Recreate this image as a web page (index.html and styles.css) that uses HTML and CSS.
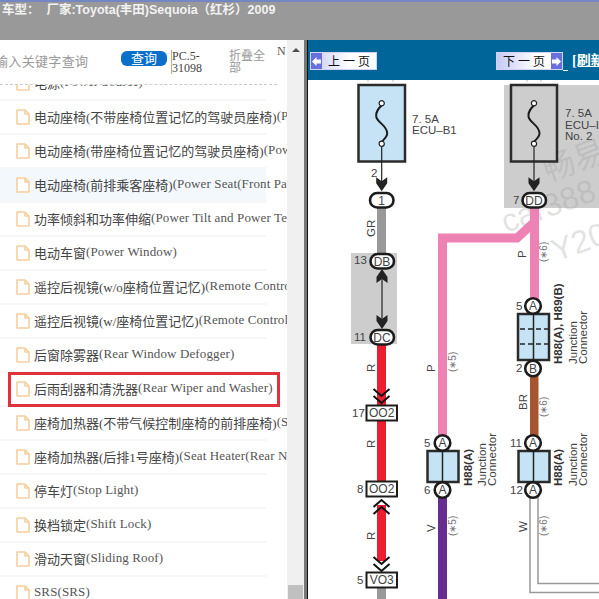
FILE: index.html
```html
<!DOCTYPE html>
<html lang="zh-CN">
<head>
    <meta charset="UTF-8">
    <title>车型</title>
    <link rel="stylesheet" href="styles.css">
</head>
<body>
    <div class="topbar">车型：&nbsp;&nbsp;厂家:Toyota(丰田)Sequoia（红杉）2009</div>

    <div class="main">
        <div class="side">
            <div class="side-col">
                <div class="search-wrap">
                    <div class="search">
                        <span class="search-input">输入关键字查询</span>
                        <span class="search-btn">查询</span>
                        <span class="search-code">PC.5-31098</span>
                        <span class="search-fold">折叠全部</span>
                    </div>
                    <span class="search-n">N</span>
                </div>
                <ul class="list">
                    <li class="row"><svg class="doc"><use href="#doc"/></svg>电源<span class="en">(Power Source)</span></li>
                    <li class="row"><svg class="doc"><use href="#doc"/></svg>电动座椅(不带座椅位置记忆的驾驶员座椅)<span class="en">(Power Seat)</span></li>
                    <li class="row"><svg class="doc"><use href="#doc"/></svg>电动座椅(带座椅位置记忆的驾驶员座椅)<span class="en">(Power Seat)</span></li>
                    <li class="row row-hover"><svg class="doc"><use href="#doc"/></svg>电动座椅(前排乘客座椅)<span class="en">(Power Seat(Front Passenger Seat))</span></li>
                    <li class="row"><svg class="doc"><use href="#doc"/></svg>功率倾斜和功率伸缩<span class="en">(Power Tilt and Power Telescopic)</span></li>
                    <li class="row"><svg class="doc"><use href="#doc"/></svg>电动车窗<span class="en">(Power Window)</span></li>
                    <li class="row"><svg class="doc"><use href="#doc"/></svg>遥控后视镜(w/o座椅位置记忆)<span class="en">(Remote Control Mirror)</span></li>
                    <li class="row"><svg class="doc"><use href="#doc"/></svg>遥控后视镜(w/座椅位置记忆)<span class="en">(Remote Control Mirror)</span></li>
                    <li class="row"><svg class="doc"><use href="#doc"/></svg>后窗除雾器<span class="en">(Rear Window Defogger)</span></li>
                    <li class="row row-marked"><svg class="doc"><use href="#doc"/></svg>后雨刮器和清洗器<span class="en">(Rear Wiper and Washer)</span></li>
                    <li class="row"><svg class="doc"><use href="#doc"/></svg>座椅加热器(不带气候控制座椅的前排座椅)<span class="en">(Seat Heater)</span></li>
                    <li class="row"><svg class="doc"><use href="#doc"/></svg>座椅加热器(后排1号座椅)<span class="en">(Seat Heater(Rear No. 1 Seat))</span></li>
                    <li class="row"><svg class="doc"><use href="#doc"/></svg>停车灯<span class="en">(Stop Light)</span></li>
                    <li class="row"><svg class="doc"><use href="#doc"/></svg>换档锁定<span class="en">(Shift Lock)</span></li>
                    <li class="row"><svg class="doc"><use href="#doc"/></svg>滑动天窗<span class="en">(Sliding Roof)</span></li>
                    <li class="row"><svg class="doc"><use href="#doc"/></svg><span class="en">SRS(SRS)</span></li>
                </ul>
            </div>
            <div class="scroll">
                <span class="scroll-up"></span>
                <span class="scroll-thumb"></span>
            </div>
        </div>

        <div class="view">
            <div class="view-head">
                <span class="page-btn page-prev"><i class="page-arrow">
                    <svg width="9" height="9" viewBox="0 0 9 9"><path d="M0 4.5 4.5 0v2.5H9v4H4.5V9z" fill="#fff"/></svg>
                </i><b>上 一 页</b></span>
                <span class="page-btn page-next"><b>下 一 页</b><i class="page-arrow">
                    <svg width="9" height="9" viewBox="0 0 9 9"><path d="M9 4.5 4.5 0v2.5H0v4h4.5V9z" fill="#fff"/></svg>
                </i></span>
                <span class="page-gap"></span>
                <span class="page-refresh">[刷新]</span>
            </div>

            <svg class="diagram" viewBox="308 80 291 519">
                <defs>
                    <symbol id="doc" viewBox="0 0 14 16">
                        <path d="M1 1h8l4 4v10H1z M9 1v4h4" fill="#fff" stroke="#f6cf9e" stroke-width="1.6" stroke-linejoin="round"/>
                    </symbol>
                    <g id="fuse">
                        <path d="M0 2C-3 5-6 8-5.500 13-5 19 5.500 22 5.500 30 5.500 34 2 36 0 38.500" class="fuse-line"/>
                        <circle cx="0" cy="0" r="2.600" class="fuse-dot"/>
                        <circle cx="0" cy="40.500" r="2.600" class="fuse-dot"/>
                        <path d="M0 43V80" class="thin"/>
                        <path d="M-5.500 74 0 78 5.500 74V80L0 88-5.500 80Z" fill="#222"/>
                    </g>
                    <g id="junction">
                        <rect x="-15" y="0" width="31" height="31" class="blue-box"/>
                        <path d="M0 0V31" class="thin2"/>
                    </g>
                    <path id="chev-down" d="M-8 0 0 7 8 0M-8 7 0 14 8 7" class="chev"/>
                    <path id="chev-up" d="M-8 7 0 0 8 7M-8 14 0 7 8 14" class="chev"/>
                </defs>

                <rect x="504" y="85" width="95" height="123" class="shade"/>
                <rect x="351" y="253" width="46" height="91" class="shade"/>
                <path d="M368 80v2M393 80v2M527 80v2M541 80v2" class="tick"/>

                <!-- watermark -->
                <text transform="translate(548 182) rotate(-20)" class="mark">畅易</text>
                <text transform="translate(506 233) rotate(-20)" class="mark">car388</text>
                <text transform="translate(556 262) rotate(-20)" class="mark">Y20</text>

                <!-- wires -->
                <rect x="377" y="206" width="9" height="50" fill="#999"/>
                <rect x="377" y="345" width="9" height="60" fill="#ed1c2e"/>
                <rect x="377" y="421" width="9" height="60" fill="#ed1c2e"/>
                <rect x="377" y="505" width="9" height="56" fill="#ed1c2e"/>
                <rect x="377" y="588" width="9" height="11" fill="#999"/>
                <path d="M442.500 440V238H517L534.500 222" class="wire-pink"/>
                <rect x="530" y="206" width="9" height="94" fill="#ee82b4"/>
                <rect x="530" y="374" width="8.500" height="62" fill="#a5552f"/>
                <rect x="438" y="496" width="9" height="103" fill="#662d91"/>
                <path d="M530 497V592.500H599M538 497V583.500H599" class="wire-white"/>

                <!-- fuses -->
                <rect x="358.500" y="85" width="46.500" height="76.500" class="blue-box"/>
                <use href="#fuse" x="381.700" y="103.300"/>
                <rect x="511" y="85" width="46" height="76.500" class="grey-box"/>
                <use href="#fuse" x="534" y="103.300"/>
                <text x="412" y="122.500" class="lbl">7. 5A</text>
                <text x="412" y="134" class="lbl">ECU–B1</text>
                <text x="565" y="117" class="lbl">7. 5A</text>
                <text x="565" y="128.500" class="lbl">ECU–IG</text>
                <text x="565" y="140" class="lbl">No. 2</text>
                <text x="371" y="177" class="lbl">2</text>
                <text x="513" y="204" class="lbl">7</text>

                <!-- ovals and boxes -->
                <rect x="370" y="193" width="23.500" height="14.500" rx="7.200" class="pin"/>
                <text x="381.700" y="204.500" class="pin-t">1</text>
                <rect x="522.500" y="193" width="23.500" height="14.500" rx="7.200" class="pin"/>
                <text x="534" y="204.500" class="pin-t">DD</text>
                <rect x="370.500" y="254" width="23.500" height="14.500" rx="7.200" class="pin"/>
                <text x="382" y="265.500" class="pin-t">DB</text>
                <rect x="370.500" y="330" width="23.500" height="14.500" rx="7.200" class="pin"/>
                <text x="382" y="341.500" class="pin-t">DC</text>
                <text x="354" y="264" class="lbl">13</text>
                <text x="354" y="341" class="lbl">11</text>

                <path d="M382 272V326" class="thin"/>
                <path d="M376.500 283 382 279 387.500 283V277L382 269 376.500 277Z" fill="#222"/>
                <path d="M376.500 315 382 319 387.500 315V321L382 329 376.500 321Z" fill="#222"/>

                <rect x="366.500" y="405.500" width="30.500" height="15" class="pin-box"/>
                <text x="381.700" y="417" class="pin-t">OO2</text>
                <rect x="366.500" y="481.500" width="30.500" height="15" class="pin-box"/>
                <text x="381.700" y="493" class="pin-t">OO2</text>
                <rect x="366.500" y="572.500" width="30.500" height="15" class="pin-box"/>
                <text x="381.700" y="584" class="pin-t">VO3</text>
                <text x="352" y="417" class="lbl">17</text>
                <text x="357" y="493" class="lbl">8</text>
                <text x="357" y="584" class="lbl">5</text>
                <use href="#chev-down" x="381.500" y="389"/>
                <use href="#chev-up" x="381.500" y="500"/>
                <use href="#chev-down" x="381.500" y="557"/>

                <!-- junction connectors -->
                <rect x="518" y="314" width="31" height="46" class="blue-box"/>
                <path d="M533.500 314V360" class="thin2"/>
                <path d="M520 329H548M520 344H548" class="dash"/>
                <circle cx="533" cy="306" r="7.800" class="pin"/>
                <text x="533" y="310" class="pin-t">A</text>
                <circle cx="533" cy="368.500" r="7.800" class="pin"/>
                <text x="533" y="372.500" class="pin-t">B</text>
                <text x="516" y="310" class="lbl">5</text>
                <text x="516" y="372" class="lbl">2</text>

                <use href="#junction" x="442.500" y="451"/>
                <circle cx="442.500" cy="443" r="7.800" class="pin"/>
                <text x="442.500" y="447" class="pin-t">A</text>
                <circle cx="442.500" cy="490" r="7.800" class="pin"/>
                <text x="442.500" y="494" class="pin-t">A</text>
                <text x="424" y="447" class="lbl">5</text>
                <text x="424" y="494" class="lbl">6</text>

                <use href="#junction" x="533.500" y="451"/>
                <circle cx="533" cy="443" r="7.800" class="pin"/>
                <text x="533" y="447" class="pin-t">A</text>
                <circle cx="533" cy="490" r="7.800" class="pin"/>
                <text x="533" y="494" class="pin-t">A</text>
                <text x="510" y="447" class="lbl">11</text>
                <text x="510" y="494" class="lbl">12</text>

                <!-- rotated labels -->
                <text transform="translate(375 237) rotate(-90)" class="lbl">GR</text>
                <text transform="translate(375 372) rotate(-90)" class="lbl">R</text>
                <text transform="translate(375 448) rotate(-90)" class="lbl">R</text>
                <text transform="translate(375 540) rotate(-90)" class="lbl">R</text>
                <text transform="translate(435 372) rotate(-90)" class="lbl">P</text>
                <text transform="translate(526 258) rotate(-90)" class="lbl">P</text>
                <text transform="translate(527 410) rotate(-90)" class="lbl">BR</text>
                <text transform="translate(435 532) rotate(-90)" class="lbl">V</text>
                <text transform="translate(527 532) rotate(-90)" class="lbl">W</text>
                <text transform="translate(456 372) rotate(-90)" class="note">(∗5)</text>
                <text transform="translate(547 262) rotate(-90)" class="note">(∗6)</text>
                <text transform="translate(547 417) rotate(-90)" class="note">(∗6)</text>
                <text transform="translate(456 536) rotate(-90)" class="note">(∗5)</text>
                <text transform="translate(547 536) rotate(-90)" class="note">(∗6)</text>

                <text transform="translate(562 364) rotate(-90)" class="lbl-b">H88(A), H89(B)</text>
                <text transform="translate(576.500 364) rotate(-90)" class="lbl">Junction</text>
                <text transform="translate(587 364) rotate(-90)" class="lbl">Connector</text>
                <text transform="translate(472 486) rotate(-90)" class="lbl-b">H88(A)</text>
                <text transform="translate(485.500 486) rotate(-90)" class="lbl">Junction</text>
                <text transform="translate(496 486) rotate(-90)" class="lbl">Connector</text>
                <text transform="translate(562 486) rotate(-90)" class="lbl-b">H88(A)</text>
                <text transform="translate(576.500 486) rotate(-90)" class="lbl">Junction</text>
                <text transform="translate(587 486) rotate(-90)" class="lbl">Connector</text>
            </svg>
        </div>
    </div>
</body>
</html>
```

FILE: styles.css
```css
html, body {
    margin: 0;
    height: 100%;
    overflow: hidden;
    background: #fff;
}
body {
    font-family: "Liberation Serif", "Noto Sans CJK SC", serif;
    font-size: 13px;
}
.topbar {
    box-sizing: border-box;
    height: 40px;
    padding: 1px 0 0 2px;
    border-top: 2px solid #7487c4;
    background: #999;
    color: #f2f2f2;
    font-family: "Liberation Sans", "Noto Sans CJK SC", sans-serif;
    font-size: 12.5px;
    font-weight: bold;
    line-height: 15px;
    white-space: nowrap;
}
.main {
    display: flex;
    height: 559px;
}

/* left tree */
.side {
    box-sizing: border-box;
    display: flex;
    width: 307px;
    flex: none;
    border-right: 3px solid #777;
}
.side-col {
    width: 287px;
    overflow: hidden;
}
.search-wrap {
    display: flex;
    height: 45px;
    position: relative;
    z-index: 1;
    background: #fff;
}
.search {
    box-sizing: border-box;
    display: flex;
    align-items: flex-start;
    width: 277px;
    height: 45px;
    flex: none;
    border-bottom: 1px dashed #ccc;
}
.search-input {
    width: 126px;
    margin: 11px 0 0 -5px;
    flex: none;
    color: #999;
    letter-spacing: .33px;
    white-space: nowrap;
}
.search-btn {
    width: 46px;
    height: 15px;
    margin-top: 11px;
    flex: none;
    border-radius: 6px;
    background: #0a6fc9;
    color: #fff;
    font-size: 13px;
    line-height: 15px;
    text-align: center;
}
.search-code {
    box-sizing: border-box;
    width: 36px;
    margin: 10px 0 0 4px;
    flex: none;
    border-left: 1px solid #c8ad80;
    color: #444;
    font-size: 12px;
    line-height: 12px;
}
.search-fold {
    width: 37px;
    margin: 10px 0 0 22px;
    flex: none;
    color: #999;
    font-size: 12px;
    line-height: 12px;
}
.search-n {
    margin-top: 4px;
    color: #555;
    font-size: 12px;
}
.list {
    margin: -18px 0 0;
    padding: 0;
    list-style: none;
}
.row {
    box-sizing: border-box;
    display: flex;
    align-items: center;
    position: relative;
    width: 266px;
    height: 34px;
    padding: 0 0 2px 16px;
    border-bottom: 2px solid #f6f6f6;
    color: #444;
    white-space: nowrap;
}
.en {
    color: #555;
    letter-spacing: .12px;
}
.row-hover {
    background: #f3f8fd;
}
.row-marked::after {
    content: "";
    position: absolute;
    left: 8px;
    top: -1px;
    width: 272px;
    height: 35px;
    box-sizing: border-box;
    border: 3px solid #e0313c;
}
.doc {
    width: 14px;
    height: 16px;
    margin: 2px 4px 0 0;
    flex: none;
}
.scroll {
    display: flex;
    flex-direction: column;
    align-items: center;
    justify-content: space-between;
    width: 17px;
    background: #f0f0f0;
}
.scroll-up {
    width: 0;
    height: 0;
    margin-top: 8px;
    border: 4px solid transparent;
    border-top: 0;
    border-bottom: 4px solid #505050;
}
.scroll-thumb {
    width: 15px;
    height: 14px;
    background: #c0c0c0;
}

/* right page */
.view {
    flex: 1;
    min-width: 0;
    border-left: 1px solid #111;
}
.view-head {
    display: flex;
    align-items: flex-start;
    box-sizing: border-box;
    height: 40px;
    padding-top: 12px;
    background: #006699;
}
.page-btn {
    display: flex;
    align-items: center;
    box-sizing: border-box;
    width: 67px;
    height: 18px;
    flex: none;
    border: 1px solid #cfd4f5;
    background: linear-gradient(to right, #c6caf6, #fff 60%);
    color: #111;
    font-size: 12px;
}
.page-btn b {
    flex: 1;
    font-weight: normal;
    text-align: center;
    white-space: nowrap;
}
.page-prev {
    margin-left: 2px;
}
.page-next {
    margin-left: 119px;
}
.page-arrow {
    display: flex;
    align-items: center;
    justify-content: center;
    width: 11px;
    height: 16px;
    background: #6a6fe0;
}
.page-gap {
    width: 5px;
    height: 18px;
    flex: none;
    border-bottom: 1px solid #fff;
}
.page-refresh {
    margin-left: 4px;
    color: #fff;
    font-size: 14px;
    font-weight: bold;
    line-height: 18px;
    text-decoration: underline;
    white-space: nowrap;
}
.diagram {
    display: block;
    width: 291px;
    height: 519px;
    font-family: "Liberation Sans", sans-serif;
}

/* diagram parts */
.shade { fill: #cdcdcd; }
.tick { fill: none; stroke: #bbb; }
.blue-box { fill: #c5e3f5; stroke: #2b2b2b; stroke-width: 2.5; }
.grey-box { fill: #cdcdcd; stroke: #2b2b2b; stroke-width: 2.5; }
.fuse-line { fill: none; stroke: #1c1c1c; stroke-width: 2; }
.fuse-dot { fill: #fff; stroke: #222; stroke-width: 1.2; }
.thin { fill: none; stroke: #222; stroke-width: 1.2; }
.thin2 { fill: none; stroke: #222; stroke-width: 1.5; }
.dash { fill: none; stroke: #222; stroke-width: 1.5; stroke-dasharray: 5 3; }
.chev { fill: none; stroke: #111; stroke-width: 2; }
.pin { fill: #fff; stroke: #1c1c1c; stroke-width: 2.6; }
.pin-box { fill: #fff; stroke: #1c1c1c; stroke-width: 2; }
.pin-t { fill: #444; font-size: 12px; text-anchor: middle; }
.lbl { fill: #444; font-size: 11.5px; }
.lbl-b { fill: #333; font-size: 11.5px; font-weight: bold; }
.note { fill: #777; font-size: 10px; }
.wire-pink { fill: none; stroke: #ee82b4; stroke-width: 9; }
.wire-white { fill: none; stroke: #999; stroke-width: 1.5; }
.mark { fill: #999; fill-opacity: .28; font-family: "Liberation Sans", "Noto Sans CJK SC", sans-serif; font-size: 32px; }
```
